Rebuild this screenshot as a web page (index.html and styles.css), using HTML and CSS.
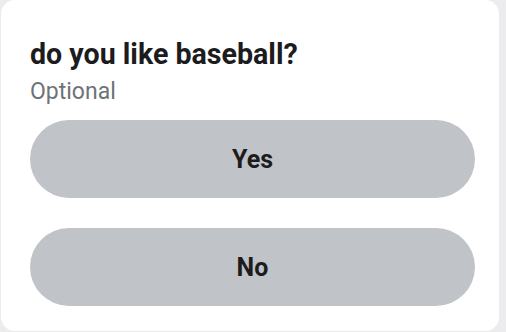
FILE: index.html
```html
<!DOCTYPE html>
<html>
<head>
<meta charset="utf-8">
<link rel="stylesheet" href="styles.css">
</head>
<body>
<div class="card">
  <h1 class="title">do you like baseball?</h1>
  <div class="hint">Optional</div>
  <div class="options">
    <button class="option">Yes</button>
    <button class="option">No</button>
  </div>
</div>
</body>
</html>
```
FILE: styles.css
```css
html, body {
  margin: 0;
  padding: 0;
  background: #ececee;
  height: 100%;
}
body {
  font-family: Roboto, "Liberation Sans", sans-serif;
  padding: 0 7px 0 1px;
  box-sizing: border-box;
}
.card {
  background: #ffffff;
  border-radius: 14px;
  height: 331px;
  box-sizing: border-box;
  padding: 37px 24px 0 29px;
}
.title {
  margin: 0;
  font-size: 28.6px;
  font-weight: 700;
  color: #1c1c1e;
  line-height: 34px;
}
.hint {
  margin-top: 7px;
  font-size: 23px;
  color: #6e7379;
  line-height: 28px;
}
.options {
  margin-top: 14px;
  display: flex;
  flex-direction: column;
  gap: 30px;
}
.option {
  display: block;
  width: 100%;
  height: 78px;
  border: none;
  border-radius: 39px;
  background: #c0c3c8;
  color: #1c1c1e;
  font-family: Roboto, "Liberation Sans", sans-serif;
  font-size: 25px;
  font-weight: 700;
  padding: 0;
}
```
